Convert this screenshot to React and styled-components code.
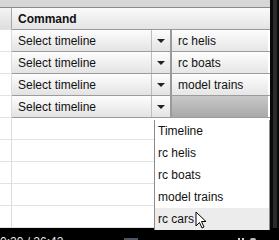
import React from "react";
import styled, { createGlobalStyle } from "styled-components";

const Global = createGlobalStyle`
  html, body { margin: 0; padding: 0; background: #000; }
  body { font-family: "Liberation Sans", Arial, sans-serif; }
`;

const Frame = styled.div`
  width: 279px;
  height: 240px;
  overflow: hidden;
  display: flex;
  flex-direction: column;
  position: relative;
  background: #000;
`;

const Upper = styled.div`
  display: flex;
  height: 228px;
`;

const Main = styled.div`
  width: 270px;
  background: #fff;
  display: flex;
  flex-direction: column;
`;

const RightEdge = styled.div`
  width: 9px;
  background: linear-gradient(90deg, #0a0a0a 0 3px, #2a2a2a 3px 7px, #0a0a0a 7px);
`;

const TopBand = styled.div`
  height: 9px;
  background: #d6d6d6;
  border-bottom: 1px solid #8a8a8a;
`;

const Row = styled.div`
  height: 22px;
  display: flex;
  flex: none;
`;

const LeftCell = styled.div`
  width: 12px;
  border-right: 1px solid ${p => (p.$header ? "#a8a8a8" : "#dcdcdc")};
  border-bottom: 1px solid #e2e2e2;
  box-sizing: border-box;
  background: ${p => (p.$header ? "linear-gradient(#f4f4f4, #dedede)" : "#fff")};
`;

const HeaderCell = styled.div`
  flex: 1;
  display: flex;
  align-items: center;
  padding-left: 6px;
  font-size: 12px;
  font-weight: bold;
  color: #111;
  background: linear-gradient(#fafafa, #e4e4e4);
  border-bottom: 1px solid #9a9a9a;
  box-sizing: border-box;
`;

const EditCell = styled.div`
  flex: 1;
  display: flex;
  align-items: stretch;
  border-bottom: 1px solid #9c9c9c;
  box-sizing: border-box;
`;

const SelectBox = styled.div`
  width: 140px;
  display: flex;
  align-items: center;
  padding-left: 6px;
  box-sizing: border-box;
  font-size: 12px;
  color: #111;
  background: linear-gradient(#fdfdfd, #e3e3e3);
  border-right: 1px solid #bcbcbc;
`;

const ArrowBtn = styled.div`
  width: 18px;
  display: flex;
  align-items: center;
  justify-content: center;
  background: linear-gradient(#fdfdfd, #e3e3e3);
  border-right: 2px solid #9a9a9a;
`;

const Arrow = styled.div`
  width: 0;
  height: 0;
  border-left: 4px solid transparent;
  border-right: 4px solid transparent;
  border-top: 4px solid #222;
`;

const TextField = styled.div`
  flex: 1;
  display: flex;
  align-items: center;
  padding-left: 6px;
  margin-right: 2px;
  font-size: 12px;
  color: #111;
  background: ${p => (p.$active ? "linear-gradient(#c8c8c8, #a9a9a9)" : "linear-gradient(#fdfdfd, #e6e6e6)")};
`;

const EmptyCell = styled.div`
  flex: 1;
  border-bottom: 1px solid #e2e2e2;
  box-sizing: border-box;
`;

const Footer = styled.div`
  height: 12px;
  background: #000;
  display: flex;
  align-items: flex-start;
  position: relative;
  overflow: hidden;
`;

const Time = styled.span`
  color: #e8e8e8;
  font-size: 12px;
  line-height: 12px;
  margin-top: 8px;
  margin-left: 0;
  white-space: nowrap;
`;

const FooterBlock = styled.div`
  position: absolute;
  top: 10px;
  left: ${p => p.$x}px;
  width: ${p => p.$w}px;
  height: 4px;
  background: ${p => p.$c};
  border-radius: ${p => p.$r || 0}px;
`;

const Menu = styled.div`
  position: absolute;
  left: 154px;
  top: 120px;
  width: 116px;
  height: 110px;
  background: #fff;
  border: 1px solid #8c8c8c;
  border-top: none;
  box-sizing: border-box;
  display: flex;
  flex-direction: column;
`;

const MenuItem = styled.div`
  height: 22px;
  flex: none;
  display: flex;
  align-items: center;
  padding-left: 3px;
  font-size: 12px;
  color: #111;
  background: ${p => (p.$hover ? "#ececec" : "transparent")};
`;

const Cursor = styled.svg`
  position: absolute;
  left: 195px;
  top: 211px;
`;

const rows = [
  { text: "rc helis" },
  { text: "rc boats" },
  { text: "model trains" },
  { text: "", active: true },
];

export default function App() {
  return (
    <>
      <Global />
      <Frame>
        <Upper>
          <Main>
            <TopBand />
            <Row>
              <LeftCell $header />
              <HeaderCell>Command</HeaderCell>
            </Row>
            {rows.map((r, i) => (
              <Row key={i}>
                <LeftCell />
                <EditCell>
                  <SelectBox>Select timeline</SelectBox>
                  <ArrowBtn>
                    <Arrow />
                  </ArrowBtn>
                  <TextField $active={r.active}>{r.text}</TextField>
                </EditCell>
              </Row>
            ))}
            {[0, 1, 2, 3, 4].map(i => (
              <Row key={"e" + i}>
                <LeftCell />
                <EmptyCell />
              </Row>
            ))}
          </Main>
          <RightEdge />
        </Upper>
        <Footer>
          <Time>0:20 / 26:42</Time>
          <FooterBlock $x={124} $w={14} $c="#4a5566" />
          <FooterBlock $x={238} $w={2} $c="#ccc" />
          <FooterBlock $x={242} $w={2} $c="#ccc" />
          <FooterBlock $x={250} $w={6} $c="#bbb" $r={3} />
        </Footer>
        <Menu>
          <MenuItem>Timeline</MenuItem>
          <MenuItem>rc helis</MenuItem>
          <MenuItem>rc boats</MenuItem>
          <MenuItem>model trains</MenuItem>
          <MenuItem $hover>rc cars</MenuItem>
        </Menu>
        <Cursor width="14" height="20" viewBox="0 0 14 20">
          <path d="M1 1 L1 15 L4.5 11.5 L7 17 L9 16 L6.5 10.5 L11 10.5 Z" fill="#fff" stroke="#000" strokeWidth="1" />
        </Cursor>
      </Frame>
    </>
  );
}
